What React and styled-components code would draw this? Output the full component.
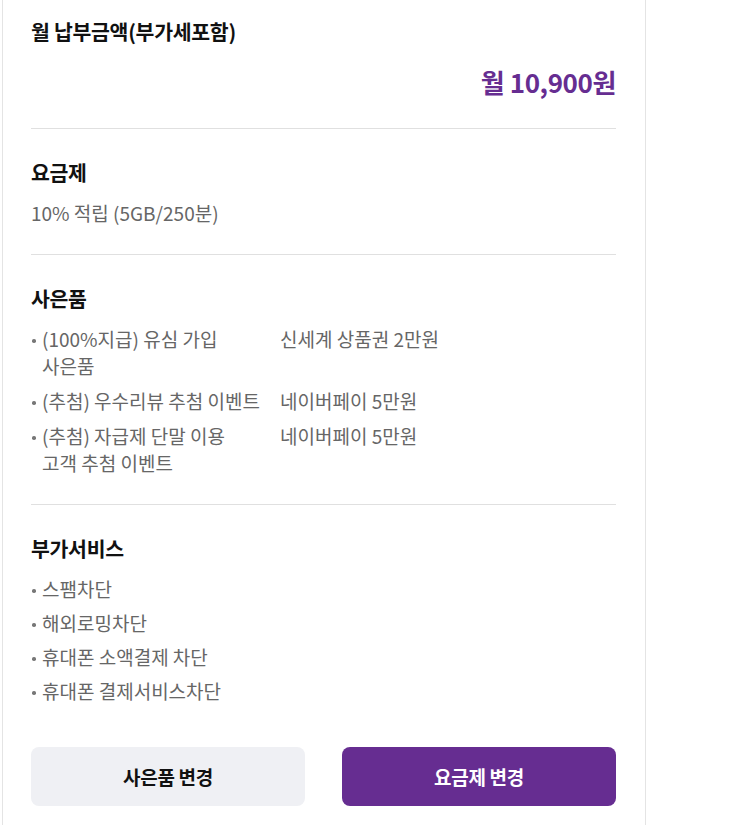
import React from 'react';
import styled, { createGlobalStyle } from 'styled-components';

const GlobalStyle = createGlobalStyle`
  html, body {
    margin: 0;
    padding: 0;
    background: #fff;
  }
  body {
    font-family: "Noto Sans CJK KR", "Noto Sans", sans-serif;
    -webkit-font-smoothing: antialiased;
  }
  * {
    box-sizing: border-box;
  }
`;

const gifts = [
  { name: '(100%지급) 유심 가입 사은품', value: '신세계 상품권 2만원' },
  { name: '(추첨) 우수리뷰 추첨 이벤트', value: '네이버페이 5만원' },
  { name: '(추첨) 자급제 단말 이용 고객 추첨 이벤트', value: '네이버페이 5만원' },
];

const services = ['스팸차단', '해외로밍차단', '휴대폰 소액결제 차단', '휴대폰 결제서비스차단'];

export default function App() {
  return (
    <>
      <GlobalStyle />
      <StyledPanel>
        <StyledPriceSection>
          <StyledTitle>월 납부금액(부가세포함)</StyledTitle>
          <StyledPrice>월 10,900원</StyledPrice>
        </StyledPriceSection>

        <StyledSection>
          <StyledHeading>요금제</StyledHeading>
          <StyledText>10% 적립 (5GB/250분)</StyledText>
        </StyledSection>

        <StyledSection>
          <StyledHeading>사은품</StyledHeading>
          <StyledList $gap={8}>
            {gifts.map((g) => (
              <StyledGiftItem key={g.name}>
                <span>{g.name}</span>
                <span>{g.value}</span>
              </StyledGiftItem>
            ))}
          </StyledList>
        </StyledSection>

        <StyledSection $last>
          <StyledHeading>부가서비스</StyledHeading>
          <StyledList $gap={7}>
            {services.map((s) => (
              <StyledItem key={s}>{s}</StyledItem>
            ))}
          </StyledList>
        </StyledSection>

        <StyledButtons>
          <StyledButton>사은품 변경</StyledButton>
          <StyledButton $primary>요금제 변경</StyledButton>
        </StyledButtons>
      </StyledPanel>
    </>
  );
}

const StyledPanel = styled.div`
  width: 644px;
  margin-left: 2px;
  min-height: 825px;
  border-left: 1px solid #e4e4e4;
  border-right: 1px solid #e4e4e4;
  padding: 18px 29px 19px 28px;
`;

const StyledPriceSection = styled.div`
  display: flex;
  flex-direction: column;
  padding-bottom: 29px;
  border-bottom: 1px solid #e0e0e0;
`;

const StyledTitle = styled.p`
  margin: 0;
  font-size: 20.5px;
  line-height: 26px;
  font-weight: 700;
  color: #111;
  letter-spacing: -0.3px;
`;

const StyledPrice = styled.p`
  margin: 21px 0 0;
  align-self: flex-end;
  font-size: 26px;
  line-height: 34px;
  font-weight: 700;
  color: #662d91;
  letter-spacing: -0.4px;
`;

const StyledSection = styled.div`
  padding: 30px 0 ${(p) => (p.$last ? '0' : '28px')};
  border-bottom: ${(p) => (p.$last ? 'none' : '1px solid #e0e0e0')};
`;

const StyledHeading = styled.h3`
  margin: 0 0 14px;
  font-size: 20.5px;
  line-height: 26px;
  font-weight: 700;
  color: #111;
  letter-spacing: -0.3px;
`;

const StyledText = styled.p`
  margin: 0;
  font-size: 19px;
  line-height: 27px;
  color: #666;
`;

const StyledList = styled.ul`
  margin: 0;
  padding: 0;
  list-style: none;
  display: flex;
  flex-direction: column;
  gap: ${(p) => p.$gap}px;
`;

const StyledItem = styled.li`
  position: relative;
  padding-left: 11px;
  font-size: 19px;
  line-height: 27px;
  color: #666;
  word-break: keep-all;

  &::before {
    content: '';
    position: absolute;
    left: 1px;
    top: 14px;
    width: 3.5px;
    height: 3.5px;
    border-radius: 50%;
    background: #777;
  }
`;

const StyledGiftItem = styled(StyledItem)`
  display: grid;
  grid-template-columns: 220px 1fr;
  column-gap: 18px;
`;

const StyledButtons = styled.div`
  display: grid;
  grid-template-columns: 1fr 1fr;
  column-gap: 37px;
  margin-top: 43px;
`;

const StyledButton = styled.button`
  height: 59px;
  border: none;
  border-radius: 8px;
  font-family: "Noto Sans CJK KR", "Noto Sans", sans-serif;
  font-size: 19px;
  font-weight: 700;
  letter-spacing: -0.3px;
  cursor: pointer;
  background: ${(p) => (p.$primary ? '#662d91' : '#eff0f4')};
  color: ${(p) => (p.$primary ? '#fff' : '#111')};
`;
